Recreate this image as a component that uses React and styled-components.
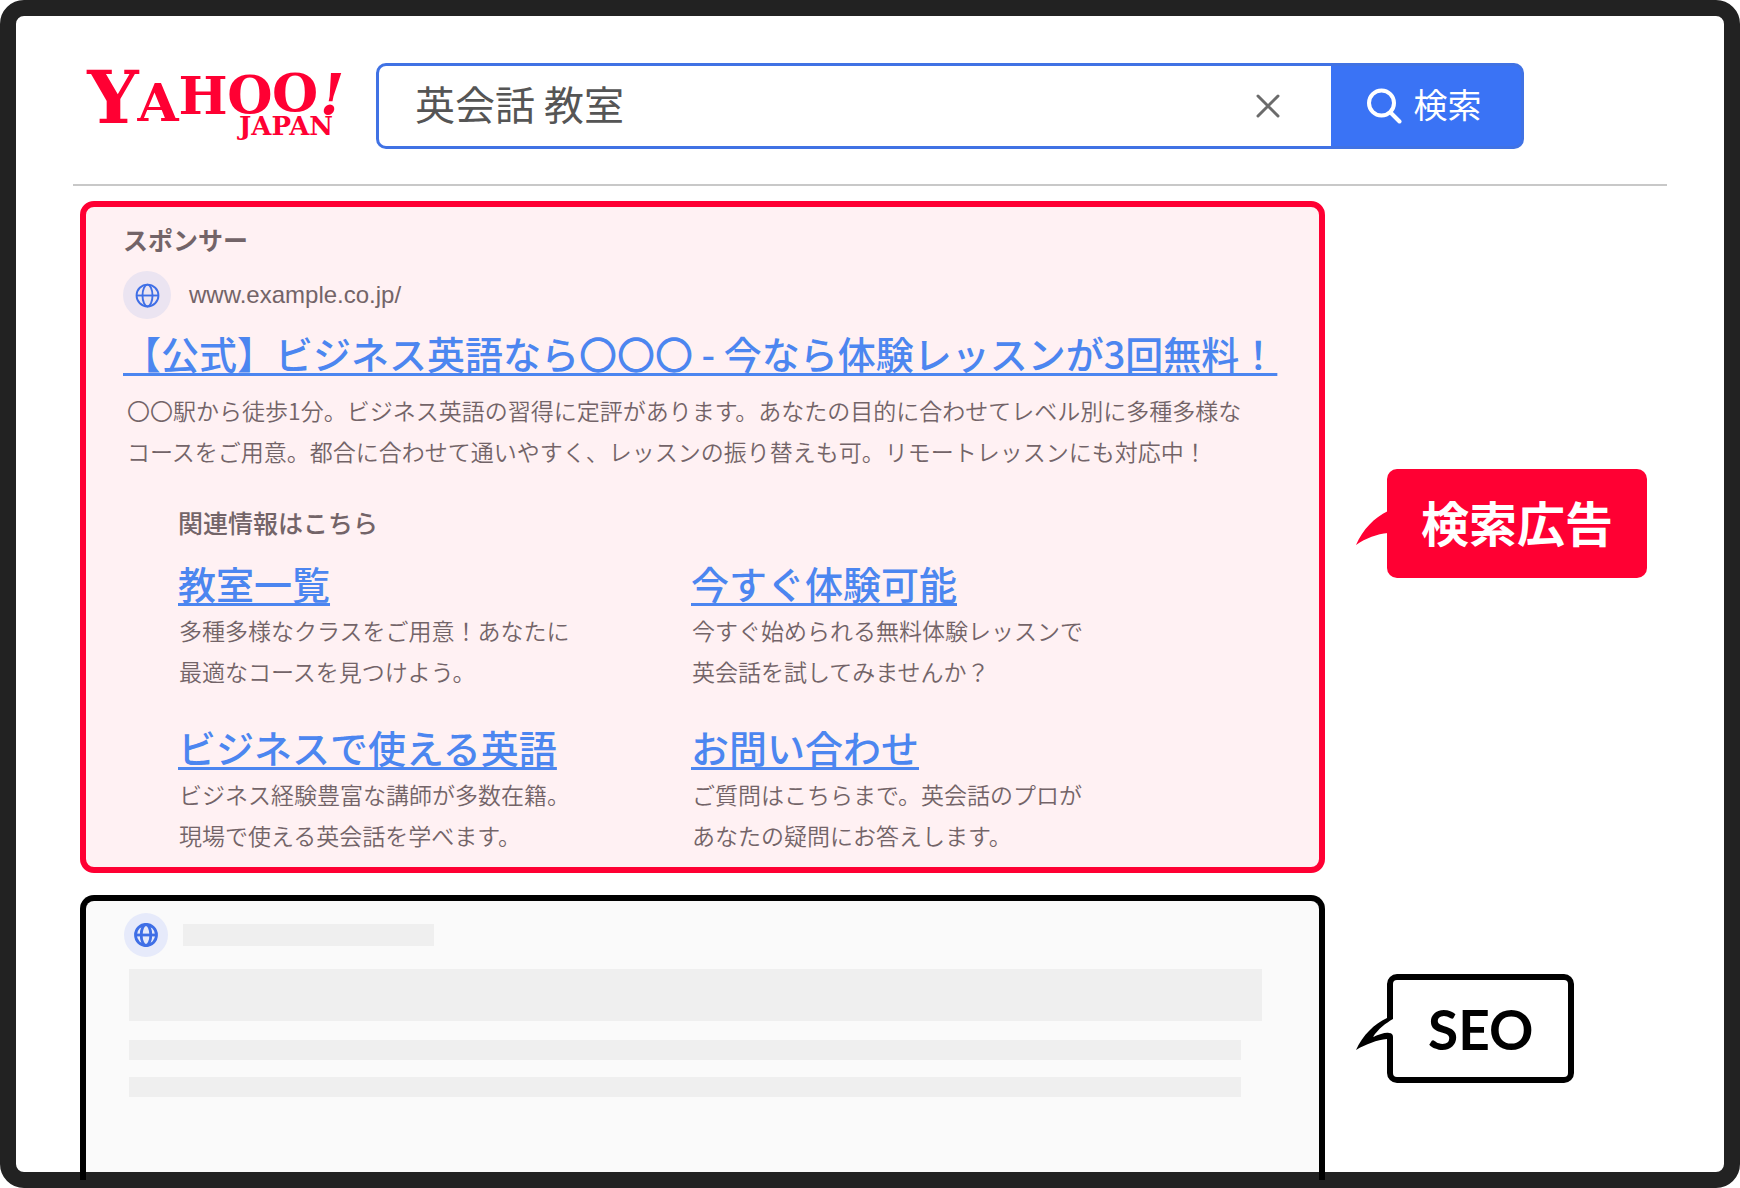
import React from 'react';
import styled, { createGlobalStyle } from 'styled-components';

const GlobalStyle = createGlobalStyle`
  *, *::before, *::after {
    box-sizing: border-box;
  }

  body {
    margin: 0;
    background: #fff;
    color: #736468;
    font-family: "Noto Sans CJK JP", sans-serif;
  }

  h2, h3, p {
    margin: 0;
  }
`;

const FrameDiv = styled.div`
  display: flex;
  flex-direction: column;
  min-height: 100vh;
  border: 16px solid #222;
  border-radius: 24px;
  background-color: #fff;
`;

const Header = styled.header`
  display: flex;
  align-items: center;
  margin: 0 57px;
  padding: 47px 143px 35px 14px;
  border-bottom: 2px solid #c8c8c8;
`;

const LogoLink = styled.a`
  flex: none;
  width: 260px;
  margin-right: 29px;
`;

const LogoSvg = styled.svg`
  display: block;
  overflow: visible;
  fill: #ff0033;
  font-family: "DejaVu Serif", serif;
  font-weight: bold;
`;

const SearchForm = styled.form`
  display: flex;
  flex: 1;
  min-width: 0;
  height: 86px;
  border: 3px solid #4072e4;
  border-radius: 10px;
  background-color: #3a73f5;
`;

const FieldDiv = styled.div`
  display: flex;
  flex: 1;
  align-items: center;
  min-width: 0;
  padding: 0 46px 0 36px;
  border-radius: 7px 0 0 7px;
  background-color: #fff;
`;

const SearchInput = styled.input`
  flex: 1;
  min-width: 0;
  height: 72px;
  padding: 0 0 6px;
  border: 0;
  outline: 0;
  background: transparent;
  color: #555;
  font-family: inherit;
  font-size: 40px;
`;

const ClearButton = styled.button`
  display: flex;
  padding: 0;
  border: 0;
  background: none;
`;

const SubmitButton = styled.button`
  display: flex;
  align-items: center;
  justify-content: center;
  gap: 12px;
  width: 190px;
  padding: 0 4px 0 0;
  border: 0;
  background: none;
  color: #fff;
  font-family: inherit;
  font-size: 34px;
  line-height: 48px;
`;

const SubmitLabel = styled.span`
  padding-bottom: 4px;
`;

const MainGrid = styled.main`
  display: grid;
  flex: 1;
  grid-template-columns: minmax(0, 1fr) 320px;
  grid-template-rows: auto 1fr;
  gap: 22px 31px;
  padding: 15px 48px 0 64px;
`;

const AdSection = styled.section`
  padding: 14px 37px 11px;
  border: 6px solid #ff0033;
  border-radius: 14px;
  background-color: #fff1f3;
`;

const SponsorP = styled.p`
  font-size: 25px;
  font-weight: 700;
  line-height: 36px;
`;

const SiteDiv = styled.div`
  display: flex;
  align-items: center;
  gap: 18px;
  margin-top: 14px;
  font-family: "Liberation Sans", sans-serif;
  font-size: 24px;
`;

const FaviconSpan = styled.span`
  display: flex;
  flex: none;
  align-items: center;
  justify-content: center;
  width: ${props => props.$size}px;
  height: ${props => props.$size}px;
  border-radius: 50%;
  background-color: ${props => props.$color};
`;

const TitleLink = styled.a`
  color: #4c86f0;
  font-size: 38px;
  font-weight: 500;
  text-decoration: underline;
  text-decoration-skip-ink: none;
  text-decoration-thickness: 3px;
  text-underline-offset: 4px;
`;

const Headline = styled.h2`
  margin: 6px 0 9px;
  font-size: 38px;
  line-height: 56px;
  white-space: nowrap;
`;

const DescriptionP = styled.p`
  padding-left: ${props => props.$indent}px;
  font-size: 23px;
  font-weight: 350;
  line-height: 41px;
`;

const RelatedDiv = styled.div`
  margin-top: 32px;
  padding-left: 55px;
`;

const RelatedP = styled.p`
  font-size: 25px;
  font-weight: 500;
  line-height: 36px;
`;

const RelatedGrid = styled.div`
  display: grid;
  grid-template-columns: 513px minmax(0, 1fr);
  row-gap: 30px;
  margin-top: 18px;
`;

const RelatedTitle = styled.h3`
  margin-bottom: 2px;
  font-size: 38px;
  line-height: 50px;
`;

// Runs down into the frame, so only the two side borders cross it.
const OrganicSection = styled.section`
  margin-bottom: -8px;
  padding: 12px 57px 0 38px;
  border: 6px solid #000;
  border-bottom: 0;
  border-radius: 14px 14px 0 0;
  background: linear-gradient(#fafafa, #fafafa) top / 100% calc(100% - 8px) no-repeat padding-box;
`;

const PlaceholderSiteDiv = styled.div`
  display: flex;
  align-items: center;
  gap: 15px;
  margin-bottom: 12px;
`;

const BarDiv = styled.div`
  width: ${props => props.$width || 'auto'};
  height: ${props => props.$height}px;
  background-color: #efefef;
`;

const BarsDiv = styled.div`
  display: flex;
  flex-direction: column;
  padding-left: 5px;
`;

const LinesDiv = styled.div`
  display: flex;
  flex-direction: column;
  gap: 17px;
  margin: 19px 21px 0 0;
`;

const CalloutDiv = styled.div`
  position: relative;
  justify-self: start;
  align-self: start;
  display: flex;
  align-items: center;
  justify-content: center;
  height: 109px;
  margin: ${props => props.$top}px 0 0 31px;
  padding: 0 34px 6px;
  border-radius: 10px;
  background-color: #ff0033;
  color: #fff;
  font-size: 48px;
  font-weight: 700;
  line-height: 72px;
`;

const OutlineCalloutDiv = styled(CalloutDiv)`
  padding: 0 35px;
  border: 6px solid #000;
  background-color: #fff;
  color: #000;
  font-family: Lato, sans-serif;
  font-size: 55px;
`;

const TailSvg = styled.svg`
  position: absolute;
  top: ${props => props.$top}px;
  left: ${props => props.$left}px;
`;

const Logo = () => (
  <LogoSvg width="260" height="86" viewBox="0 -10 260 86" role="img" aria-label="YAHOO! JAPAN">
    <g textAnchor="middle">
      <text fontSize="72" x="26" y="50">Y</text>
      <text fontSize="53" x="71" y="48">A</text>
      <text fontSize="52" x="116" y="41">H</text>
      <text fontSize="52" x="163" y="40">O</text>
      <text fontSize="53" x="208" y="38">O</text>
      <text fontSize="56" x="245" y="41" fontStyle="italic">!</text>
    </g>
    <text fontSize="26" x="152" y="62">JAPAN</text>
  </LogoSvg>
);

const Globe = ({ size, stroke }) => (
  <svg width={size} height={size} viewBox="0 0 24 24" fill="none" stroke="#3f6fe6" strokeWidth={stroke}>
    <circle cx="12" cy="12" r="10.5" />
    <ellipse cx="12" cy="12" rx="4.8" ry="10.5" />
    <path d="M1.5 12h21" />
  </svg>
);

const links = [
  { title: '教室一覧', lines: ['多種多様なクラスをご用意！あなたに', '最適なコースを見つけよう。'] },
  { title: '今すぐ体験可能', lines: ['今すぐ始められる無料体験レッスンで', '英会話を試してみませんか？'] },
  { title: 'ビジネスで使える英語', lines: ['ビジネス経験豊富な講師が多数在籍。', '現場で使える英会話を学べます。'] },
  { title: 'お問い合わせ', lines: ['ご質問はこちらまで。英会話のプロが', 'あなたの疑問にお答えします。'] }
];

const RelatedLink = props => (
  <div>
    <RelatedTitle>
      <TitleLink href="#">{props.title}</TitleLink>
    </RelatedTitle>
    <DescriptionP $indent={1}>
      {props.lines[0]}<br />{props.lines[1]}
    </DescriptionP>
  </div>
);

const App = () => {
  return (
    <FrameDiv>
      <GlobalStyle />
      <Header>
        <LogoLink href="#"><Logo /></LogoLink>
        <SearchForm onSubmit={e => e.preventDefault()}>
          <FieldDiv>
            <SearchInput type="text" aria-label="検索" defaultValue="英会話 教室" />
            <ClearButton type="reset" aria-label="クリア">
              <svg width="34" height="34" viewBox="0 0 34 34" stroke="#6b6b6b" strokeWidth="3" strokeLinecap="round">
                <path d="M7 7l20 20M27 7l-20 20" />
              </svg>
            </ClearButton>
          </FieldDiv>
          <SubmitButton type="submit">
            <svg width="35" height="36" viewBox="0 0 35 36" fill="none" stroke="#fff" strokeWidth="4" strokeLinecap="round">
              <circle cx="14.5" cy="15" r="12.5" />
              <path d="M23.5 24.5l9 9" />
            </svg>
            <SubmitLabel>検索</SubmitLabel>
          </SubmitButton>
        </SearchForm>
      </Header>
      <MainGrid>
        <AdSection>
          <SponsorP>スポンサー</SponsorP>
          <SiteDiv>
            <FaviconSpan $size={48} $color="#ebe4f1"><Globe size={25} stroke={1.8} /></FaviconSpan>
            www.example.co.jp/
          </SiteDiv>
          <Headline>
            <TitleLink href="#">【公式】ビジネス英語なら〇〇〇 - 今なら体験レッスンが3回無料！</TitleLink>
          </Headline>
          <DescriptionP $indent={4}>
            〇〇駅から徒歩1分。ビジネス英語の習得に定評があります。あなたの目的に合わせてレベル別に多種多様な<br />
            コースをご用意。都合に合わせて通いやすく、レッスンの振り替えも可。リモートレッスンにも対応中！
          </DescriptionP>
          <RelatedDiv>
            <RelatedP>関連情報はこちら</RelatedP>
            <RelatedGrid>
              {links.map(link => <RelatedLink key={link.title} {...link} />)}
            </RelatedGrid>
          </RelatedDiv>
        </AdSection>
        <CalloutDiv $top={268}>
          <TailSvg $top={40} $left={-31} width="32" height="36" viewBox="0 0 32 36">
            <path fill="#ff0033" d="M32 2C18 9 7 20 0 36C10 29 21 25 32 24Z" />
          </TailSvg>
          検索広告
        </CalloutDiv>
        <OrganicSection>
          <PlaceholderSiteDiv>
            <FaviconSpan $size={44} $color="#e6eafa"><Globe size={24} stroke={2.8} /></FaviconSpan>
            <BarDiv $width="251px" $height={22} />
          </PlaceholderSiteDiv>
          <BarsDiv>
            <BarDiv $height={52} />
            <LinesDiv>
              <BarDiv $height={20} />
              <BarDiv $height={20} />
            </LinesDiv>
          </BarsDiv>
        </OrganicSection>
        <OutlineCalloutDiv $top={79}>
          <TailSvg $top={34} $left={-37} width="37" height="36" viewBox="0 0 37 36">
            <path d="M31 4C18 10 7 21 0 36C10 30 21 26 31 25H37V4Z" />
            <path fill="#fff" d="M37 5C30 9 22 15 17 23C24 20 30 18 33 19C36 19 37 21 37 23Z" />
          </TailSvg>
          SEO
        </OutlineCalloutDiv>
      </MainGrid>
    </FrameDiv>
  );
};

export default App;
